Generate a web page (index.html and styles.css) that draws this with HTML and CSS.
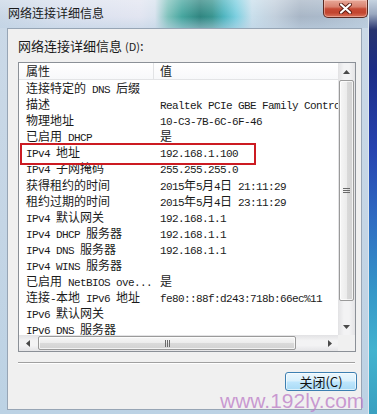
FILE: index.html
```html
<!DOCTYPE html>
<html lang="zh-CN">
<head>
<meta charset="utf-8">
<title>网络连接详细信息</title>
<link rel="stylesheet" href="styles.css">
</head>
<body>
<div class="screen">
  <div class="window">
    <div class="titlebar">
      <span class="title">网络连接详细信息</span>
      <div class="close">
        <svg width="13" height="11" viewBox="0 0 13 11">
          <path d="M2 1.5 L11 9.5 M11 1.5 L2 9.5" stroke="#5a1d14" stroke-width="4" stroke-linecap="round"/>
          <path d="M2 1.5 L11 9.5 M11 1.5 L2 9.5" stroke="#ffffff" stroke-width="2.2" stroke-linecap="round"/>
        </svg>
      </div>
    </div>
    <div class="panel">
      <div class="label">网络连接详细信息 <span class="acc">(D)</span>:</div>
      <div class="listbox">
        <div class="list">
          <div class="header"><span class="h1">属性</span><span class="h2">值</span></div>
          <div class="row"><span class="c1">连接特定的<span class="m"> DNS </span>后缀</span><span class="c2"></span></div>
          <div class="row"><span class="c1">描述</span><span class="c2"><span class="m">Realtek PCIe GBE Family Controller</span></span></div>
          <div class="row"><span class="c1">物理地址</span><span class="c2"><span class="m">10-C3-7B-6C-6F-46</span></span></div>
          <div class="row"><span class="c1">已启用<span class="m"> DHCP</span></span><span class="c2">是</span></div>
          <div class="row mark"><span class="c1"><span class="m">IPv4 </span>地址</span><span class="c2"><span class="m">192.168.1.100</span></span></div>
          <div class="row"><span class="c1"><span class="m">IPv4 </span>子网掩码</span><span class="c2"><span class="m">255.255.255.0</span></span></div>
          <div class="row"><span class="c1">获得租约的时间</span><span class="c2"><span class="m">2015</span>年<span class="m">5</span>月<span class="m">4</span>日<span class="m"> 21:11:29</span></span></div>
          <div class="row"><span class="c1">租约过期的时间</span><span class="c2"><span class="m">2015</span>年<span class="m">5</span>月<span class="m">4</span>日<span class="m"> 23:11:29</span></span></div>
          <div class="row"><span class="c1"><span class="m">IPv4 </span>默认网关</span><span class="c2"><span class="m">192.168.1.1</span></span></div>
          <div class="row"><span class="c1"><span class="m">IPv4 DHCP </span>服务器</span><span class="c2"><span class="m">192.168.1.1</span></span></div>
          <div class="row"><span class="c1"><span class="m">IPv4 DNS </span>服务器</span><span class="c2"><span class="m">192.168.1.1</span></span></div>
          <div class="row"><span class="c1"><span class="m">IPv4 WINS </span>服务器</span><span class="c2"></span></div>
          <div class="row"><span class="c1">已启用<span class="m"> NetBIOS ove...</span></span><span class="c2">是</span></div>
          <div class="row"><span class="c1">连接<span class="m">-</span>本地<span class="m"> IPv6 </span>地址</span><span class="c2"><span class="m">fe80::88f:d243:718b:66ec%11</span></span></div>
          <div class="row"><span class="c1"><span class="m">IPv6 </span>默认网关</span><span class="c2"></span></div>
          <div class="row"><span class="c1"><span class="m">IPv6 DNS </span>服务器</span><span class="c2"></span></div>
        </div>
        <div class="vscroll">
          <div class="arrow">
            <svg width="7" height="4" viewBox="0 0 7 4"><path d="M0 4 L3.5 0 L7 4 Z" fill="#4a4a4a"/></svg>
          </div>
          <div class="vthumb">
            <svg width="7" height="7" viewBox="0 0 7 7"><path d="M0 1.5 H7 M0 3.5 H7 M0 5.5 H7" stroke="#6a6a6a" stroke-width="1"/></svg>
          </div>
          <div class="spacer"></div>
          <div class="arrow">
            <svg width="7" height="4" viewBox="0 0 7 4"><path d="M0 0 L3.5 4 L7 0 Z" fill="#4a4a4a"/></svg>
          </div>
        </div>
        <div class="hscroll">
          <div class="harrow">
            <svg width="4" height="7" viewBox="0 0 4 7"><path d="M4 0 L0 3.5 L4 7 Z" fill="#4a4a4a"/></svg>
          </div>
          <div class="hthumb">
            <svg width="7" height="7" viewBox="0 0 7 7"><path d="M1.5 0 V7 M3.5 0 V7 M5.5 0 V7" stroke="#6a6a6a" stroke-width="1"/></svg>
          </div>
          <div class="spacer"></div>
          <div class="harrow">
            <svg width="4" height="7" viewBox="0 0 4 7"><path d="M0 0 L4 3.5 L0 7 Z" fill="#4a4a4a"/></svg>
          </div>
        </div>
        <div class="corner"></div>
      </div>
      <div class="sep"></div>
      <div class="actions"><div class="btn">关闭(C)</div></div>
    </div>
    <div class="watermark">www.192ly.com</div>
  </div>
  <div class="desktop"></div>
</div>
</body>
</html>
```

FILE: styles.css
```css
* { box-sizing: border-box; margin: 0; padding: 0; }
html, body { width: 377px; height: 414px; overflow: hidden; }
body {
  font-family: "Noto Sans CJK SC", "Liberation Sans", sans-serif;
  font-size: 12px;
  color: #161616;
  background: #2a4fa8;
}
.screen { display: flex; width: 377px; height: 414px; }

.window {
  position: relative;
  width: 368px;
  height: 414px;
  display: flex;
  flex-direction: column;
  padding: 0 6px 4px 7px;
  background: linear-gradient(180deg, #cbd9e7 0%, #c4d5e5 55%, #bcd2e4 100%);
}

.titlebar {
  display: flex;
  align-items: flex-start;
  height: 28px;
  margin: 0 -6px 0 -7px;
  background:
    linear-gradient(180deg, rgba(255,255,255,0.25) 0%, rgba(255,255,255,0) 60%, rgba(190,210,228,0.5) 100%),
    linear-gradient(90deg, #c9d7e6 0px, #d9e0ee 60px, #e2e5f1 140px, #d8e2ee 155px, #7fc2bc 168px, #46a69f 182px, #2f8580 200px, #38948f 212px, #4fb5c0 224px, #7ccfe0 236px, #c9dfec 252px, #c2cfdc 275px, #a8b6c6 300px, #aab9ca 322px, #b9c9d9 368px);
}
.title {
  margin: 5px 0 0 8px;
  line-height: 16px;
  font-size: 12px;
  color: #1a1a1a;
}
.close {
  margin-left: auto;
  width: 45px;
  height: 18px;
  display: flex;
  align-items: center;
  justify-content: center;
  border: 1px solid #5b2a22;
  border-top: none;
  border-radius: 0 0 5px 5px;
  background: linear-gradient(180deg, #e8a898 0%, #d98270 40%, #c64a35 52%, #c2452f 75%, #d9735c 100%);
  box-shadow: inset 0 0 0 1px rgba(255,220,210,0.45);
}

.panel {
  flex: 1;
  display: flex;
  flex-direction: column;
  border: 1px solid #97a5b5;
  background: #f0f0f0;
  padding: 9px 5px 0 10px;
}
.label {
  height: 16px;
  line-height: 16px;
  font-size: 13px;
  color: #1a1a1a;
  white-space: nowrap;
}
.label .acc { font-size: 11px; }

.listbox {
  margin-top: 8px;
  width: 338px;
  height: 290px;
  border: 1px solid #8b9097;
  background: #fff;
  display: grid;
  grid-template-columns: 319px 17px;
  grid-template-rows: 272px 16px;
}
.list { overflow: hidden; }
.header {
  height: 17px;
  display: grid;
  grid-template-columns: 135px 1fr;
  border-bottom: 1px solid #e3e4e6;
  background: linear-gradient(180deg, #ffffff 0%, #f7f8fa 100%);
  line-height: 16px;
  font-size: 12px;
  color: #1a1a1a;
}
.h1 { padding-left: 7px; border-right: 1px solid #e2e3e5; }
.h2 { padding-left: 6px; }

.row {
  height: 16.1px;
  display: grid;
  grid-template-columns: 135px 1fr;
  line-height: 16px;
  white-space: nowrap;
  color: #1a1a1a;
}
.c1 { padding-left: 7px; overflow: hidden; }
.c2 { padding-left: 6px; overflow: hidden; }
.m {
  font-family: "Liberation Mono", monospace;
  font-size: 11px;
  letter-spacing: -0.6px;
}

.row.mark { position: relative; }
.row.mark::after {
  content: "";
  position: absolute;
  left: 1px;
  top: -1px;
  width: 232px;
  height: 18px;
  border: 2px solid #cc1b22;
}

.vscroll {
  display: flex;
  flex-direction: column;
  background: linear-gradient(90deg, #e2e2e4 0%, #f3f3f4 35%, #f3f3f4 65%, #e4e4e6 100%);
}
.arrow {
  height: 17px;
  display: flex;
  align-items: center;
  justify-content: center;
}
.vthumb {
  height: 221px;
  margin: 0 1px;
  border: 1px solid #9a9a9a;
  border-radius: 2px;
  background: linear-gradient(90deg, #f6f6f6 0%, #ececec 50%, #dadada 52%, #d2d2d2 100%);
  box-shadow: inset 0 0 0 1px rgba(255,255,255,0.7);
  display: flex;
  align-items: center;
  justify-content: center;
}
.spacer { flex: 1; }

.hscroll {
  display: flex;
  background: linear-gradient(180deg, #e2e2e4 0%, #f3f3f4 35%, #f3f3f4 65%, #e4e4e6 100%);
}
.harrow {
  width: 17px;
  display: flex;
  align-items: center;
  justify-content: center;
}
.hthumb {
  width: 258px;
  margin: 1px 0 1px 2px;
  border: 1px solid #9a9a9a;
  border-radius: 2px;
  background: linear-gradient(180deg, #f6f6f6 0%, #ececec 50%, #dadada 52%, #d2d2d2 100%);
  box-shadow: inset 0 0 0 1px rgba(255,255,255,0.7);
  display: flex;
  align-items: center;
  justify-content: center;
}
.corner { background: #f0f0f0; }

.sep {
  margin-top: 10px;
  width: 337px;
  height: 2px;
  border-top: 1px solid #a0a0a0;
  border-bottom: 1px solid #ffffff;
}
.actions {
  display: flex;
  justify-content: flex-end;
  margin: 8px -1px 0 0;
}
.btn {
  width: 72px;
  height: 19px;
  border: 1px solid #3c7fb1;
  border-radius: 3px;
  background: linear-gradient(180deg, #eaf6fd 0%, #d9f0fc 48%, #bee6fd 52%, #a9daf5 100%);
  box-shadow: inset 0 0 0 1px rgba(255,255,255,0.6);
  font-size: 13px;
  line-height: 17px;
  text-align: center;
  color: #111;
}

.watermark {
  position: absolute;
  left: 220px;
  top: 390px;
  font-family: "Liberation Sans", Arial, sans-serif;
  font-size: 21px;
  line-height: 21px;
  color: rgba(190, 128, 200, 0.78);
  white-space: nowrap;
}

.desktop {
  flex: 1;
  background: linear-gradient(180deg, #c6d3e0 0px, #9aa8c0 14px, #27336e 30px, #1c2c86 70px, #2743b0 150px, #2f6cc2 220px, #3596c8 290px, #43b3cf 350px, #3aa0c0 414px);
  box-shadow: inset 1px 0 0 #dfe7ef;
}
```
